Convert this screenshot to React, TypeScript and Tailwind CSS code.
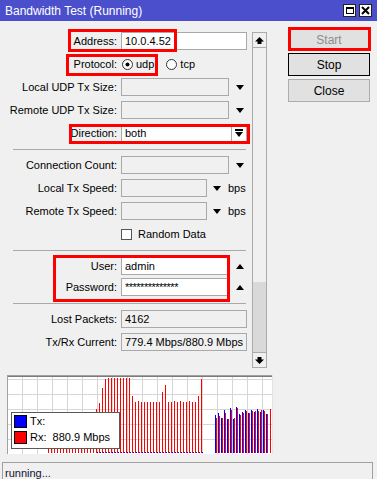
// Bandwidth Test window (Winbox style) with running graph

import React from 'react'

const FONT = "font-['Liberation_Sans',Arial,sans-serif]"

const DownArrow = () => (
  <svg width="8" height="5" viewBox="0 0 8 5" className="shrink-0">
    <path d="M0 0H8L4 5Z" fill="#000" />
  </svg>
)

const UpArrow = () => (
  <svg width="8" height="5" viewBox="0 0 8 5" className="shrink-0">
    <path d="M0 5H8L4 0Z" fill="#000" />
  </svg>
)

const Row: React.FC<{ label: string; className?: string; children?: React.ReactNode }> = ({ label, className = '', children }) => (
  <div className={`flex h-[18px] items-center ${className}`}>
    <span className="w-[117px] text-right whitespace-nowrap">{label}</span>
    <div className="ml-[4px] flex h-full items-center">{children}</div>
  </div>
)

const Field: React.FC<{ w: string; value?: React.ReactNode; disabled?: boolean }> = ({ w, value, disabled }) => (
  <div
    className={`${w} h-[18px] border border-[#a9a9a9] px-[3px] leading-[16px] whitespace-nowrap overflow-hidden ${disabled ? 'bg-[#f0f0f0]' : 'bg-white'}`}
  >
    {value}
  </div>
)

const Radio: React.FC<{ checked?: boolean }> = ({ checked }) => (
  <svg width="11" height="11" viewBox="0 0 11 11" className="shrink-0">
    <circle cx="5.5" cy="5.5" r="5" fill="#fff" stroke="#333" />
    {checked && <circle cx="5.5" cy="5.5" r="2" fill="#000" />}
  </svg>
)

const Separator: React.FC<{ className?: string }> = ({ className = '' }) => (
  <div className={`ml-[13px] w-[233px] border-t border-[#a9a9a9] ${className}`} />
)

// chart data (abs coords taken from the window, converted below)
const redMain = [
  409, 403, 388, 379, 378, 378, 378, 378, 378, 378, 378, 378, 396, 402, 401, 402, 402, 402,
  402, 402, 402, 402, 392, 385, 402, 402, 401, 402, 401, 402, 402, 401, 402, 402, 396, 379,
]
const bluePairs = [415, 413, 418, 410, 419, 408, 419, 407, 414, 412, 410, 413, 410, 412, 409, 412, 410, 414]
const redPairs = [418, 416, 418, 413, 419, 410, 418, 408, 415, 413, 411, 413, 411, 411, 411, 410, 411, 414]

const BOTTOM = 78
const toY = (abs: number) => abs - 375

const Graph = () => {
  const vLines = Array.from({ length: 17 }, (_, k) => 15 * (k + 1) + 0.5)
  const hLines = [4.5, 19.5, 34.5, 49.5, 64.5]
  return (
    <div className="relative ml-[7px] mt-[7px] h-[79px] w-[266px] bg-white">
      <svg width="266" height="79" viewBox="0 0 266 79" className="block">
        {vLines.map((x) => (
          <line key={`v${x}`} x1={x} y1="0" x2={x} y2="79" stroke="#d6d6d6" />
        ))}
        {hLines.map((y) => (
          <line key={`h${y}`} x1="0" y1={y} x2="266" y2={y} stroke="#d6d6d6" />
        ))}
        {Array.from({ length: 16 }, (_, i) => (
          <rect key={`s${i}`} x={41 + 3 * i} y={50} width="1" height={BOTTOM - 50} fill="#ff0000" />
        ))}
        {redMain.map((top, i) => (
          <g key={`m${i}`}>
            <rect x={89 + 3 * i} y={toY(top)} width="1" height={BOTTOM - toY(top)} fill="#ff0000" />
            <rect x={90 + 3 * i} y={BOTTOM - 1} width="1" height="1" fill="#0000ff" />
          </g>
        ))}
        {bluePairs.map((top, i) => (
          <g key={`p${i}`}>
            <rect x={208 + 3 * i} y={toY(top)} width="1" height={BOTTOM - toY(top)} fill="#0000ff" />
            <rect x={209 + 3 * i} y={toY(redPairs[i])} width="1" height={BOTTOM - toY(redPairs[i])} fill="#ff0000" />
          </g>
        ))}
        <rect x="263" y={toY(409)} width="1" height={BOTTOM - toY(409)} fill="#ff0000" />
        <line x1="0" y1="0.5" x2="266" y2="0.5" stroke="#a0a0a0" />
        <line x1="0" y1="1.5" x2="266" y2="1.5" stroke="#7a7a7a" />
        <line x1="0.5" y1="0" x2="0.5" y2="79" stroke="#a0a0a0" />
        <line x1="265.5" y1="0" x2="265.5" y2="79" stroke="#e3e3e3" />
      </svg>

      {/* legend */}
      <div className="absolute left-[4px] top-[37px] flex h-[37px] w-[109px] flex-col gap-[3px] border border-[#5a5a5a] bg-white pl-[2px] pt-[2px]">
        <div className="flex h-[13px] items-center">
          <span className="h-[13px] w-[13px] border border-black bg-[#0000ff]" />
          <span className="ml-[3px]">Tx:</span>
        </div>
        <div className="flex h-[13px] items-center">
          <span className="h-[13px] w-[13px] border border-black bg-[#ff0000]" />
          <span className="ml-[3px] whitespace-pre">Rx:  880.9 Mbps</span>
        </div>
      </div>
    </div>
  )
}

const ScrollArrow: React.FC<{ down?: boolean }> = ({ down }) => (
  <svg width="9" height="7" viewBox="0 0 9 7" className={down ? 'rotate-180' : ''}>
    <path d="M4.5 0L9 4.5H6.5V7H2.5V4.5H0Z" fill="#000" />
  </svg>
)

const App: React.FC = () => {
  return (
    <div className={`relative h-[479px] w-[377px] overflow-hidden bg-[#f0f0f0] text-[11px] text-black ${FONT}`}>
      {/* Title bar */}
      <div className="flex h-[21px] items-center justify-between bg-[#4b4fcb] pl-[5px] pr-[5px] text-[12px] text-white">
        <span>Bandwidth Test (Running)</span>
        <div className="flex gap-[3px]">
          <div className="flex h-[13px] w-[13px] items-center justify-center border border-[#222] bg-white">
            <div className="h-[7px] w-[8px] border border-t-2 border-black" />
          </div>
          <div className="flex h-[13px] w-[13px] items-center justify-center border border-[#222] bg-white">
            <svg width="9" height="9" viewBox="0 0 9 9">
              <path d="M1 1L8 8M8 1L1 8" stroke="#000" strokeWidth="2" />
            </svg>
          </div>
        </div>
      </div>

      {/* Body */}
      <div className="flex h-[347px]">
        {/* Form */}
        <div className="flex w-[252px] flex-col pt-[11px]">
          <Row label="Address:">
            <Field w="w-[126px]" value="10.0.4.52" />
          </Row>
          <Row label="Protocol:" className="mt-[5px]">
            <div className="flex items-center pl-[1px]">
              <Radio checked />
              <span className="ml-[3px]">udp</span>
              <span className="ml-[12px]"><Radio /></span>
              <span className="ml-[3px]">tcp</span>
            </div>
          </Row>
          <Row label="Local UDP Tx Size:" className="mt-[5px]">
            <Field w="w-[108px]" disabled />
            <span className="ml-[7px]"><DownArrow /></span>
          </Row>
          <Row label="Remote UDP Tx Size:" className="mt-[5px]">
            <Field w="w-[108px]" disabled />
            <span className="ml-[7px]"><DownArrow /></span>
          </Row>
          <Row label="Direction:" className="mt-[5px]">
            <div className="flex h-[18px] w-[126px] border border-[#a9a9a9] bg-white">
              <span className="flex-1 px-[3px] leading-[16px]">both</span>
              <div className="flex w-[15px] flex-col items-center justify-center border-l border-[#a9a9a9]">
                <div className="h-[2px] w-[8px] bg-black" />
                <div className="mt-[1px]"><DownArrow /></div>
              </div>
            </div>
          </Row>

          <Separator className="mt-[7px]" />

          <Row label="Connection Count:" className="mt-[6px]">
            <Field w="w-[108px]" disabled />
            <span className="ml-[7px]"><DownArrow /></span>
          </Row>
          <Row label="Local Tx Speed:" className="mt-[5px]">
            <Field w="w-[86px]" disabled />
            <span className="ml-[6px]"><DownArrow /></span>
            <span className="ml-[7px]">bps</span>
          </Row>
          <Row label="Remote Tx Speed:" className="mt-[5px]">
            <Field w="w-[86px]" disabled />
            <span className="ml-[6px]"><DownArrow /></span>
            <span className="ml-[7px]">bps</span>
          </Row>
          <Row label="" className="mt-[5px]">
            <span className="h-[11px] w-[11px] border border-[#555] bg-white" />
            <span className="ml-[6px]">Random Data</span>
          </Row>

          <Separator className="mt-[7px]" />

          <Row label="User:" className="mt-[6px]">
            <Field w="w-[107px]" value="admin" />
            <span className="ml-[8px]"><UpArrow /></span>
          </Row>
          <Row label="Password:" className="mt-[3px]">
            <Field w="w-[107px]" value={<span className="tracking-[-0.5px]">**************</span>} />
            <span className="ml-[8px]"><UpArrow /></span>
          </Row>

          <Separator className="mt-[7px]" />

          <Row label="Lost Packets:" className="mt-[6px]">
            <Field w="w-[126px]" value="4162" disabled />
          </Row>
          <Row label="Tx/Rx Current:" className="mt-[5px]">
            <Field w="w-[126px]" value="779.4 Mbps/880.9 Mbps" disabled />
          </Row>
        </div>

        {/* Scrollbar */}
        <div className="mt-[11px] flex h-[336px] w-[15px] flex-col border border-[#ababab] bg-[#f0f0f0]">
          <div className="flex h-[15px] items-center justify-center border-b border-[#ababab]">
            <ScrollArrow />
          </div>
          <div className="flex flex-1 flex-col justify-end">
            <div className="h-[70px] bg-[#d9d9d9]" />
          </div>
          <div className="flex h-[15px] items-center justify-center border-t border-[#ababab]">
            <ScrollArrow down />
          </div>
        </div>

        {/* Buttons */}
        <div className="ml-[21px] flex flex-col pt-[7px] text-[12px]">
          <button className="h-[23px] w-[82px] border border-[#adadad] bg-[#e1e1e1] text-[#8d8d8d]">Start</button>
          <button className="mt-[2px] h-[23px] w-[82px] border border-black bg-[#e1e1e1]">Stop</button>
          <button className="mt-[3px] h-[23px] w-[82px] border border-[#adadad] bg-[#e1e1e1]">Close</button>
        </div>
      </div>

      <Graph />

      {/* Status bar */}
      <div className="ml-[2px] mt-[8px] h-[20px] w-[371px] border-l border-r border-t border-[#a0a0a0] pl-[2px] pt-[2px] text-[#101030]">
        running...
      </div>

      {/* red annotation boxes */}
      <div className="pointer-events-none absolute left-[68px] top-[29px] h-[23px] w-[109px] border-[3px] border-[#ff0000]" />
      <div className="pointer-events-none absolute left-[66px] top-[54px] h-[22px] w-[92px] border-[3px] border-[#ff0000]" />
      <div className="pointer-events-none absolute left-[69px] top-[124px] h-[20px] w-[181px] border-[3px] border-[#ff0000]" />
      <div className="pointer-events-none absolute left-[53px] top-[255px] h-[47px] w-[177px] border-[3px] border-[#ff0000]" />
      <div className="pointer-events-none absolute left-[288px] top-[27px] h-[24px] w-[83px] border-[3px] border-[#ff0000]" />
    </div>
  )
}

export default App
